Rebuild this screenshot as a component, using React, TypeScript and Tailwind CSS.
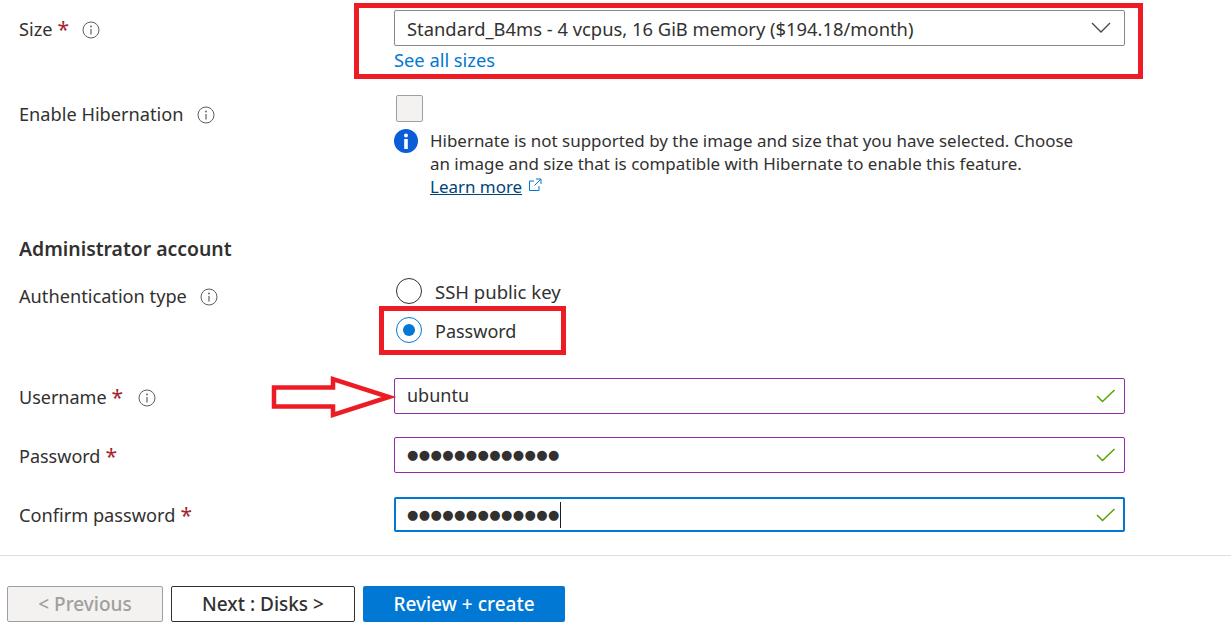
import type { ReactNode } from "react";

function InfoIcon() {
  return (
    <svg width="18" height="18" viewBox="0 0 18 18" className="shrink-0 text-[#605e5c]" fill="none" stroke="currentColor">
      <circle cx="9" cy="9" r="8" strokeWidth="1" />
      <path d="M9 8v5.5" strokeWidth="1.2" />
      <circle cx="9" cy="5.5" r="0.9" fill="currentColor" stroke="none" />
    </svg>
  );
}

function Check() {
  return (
    <svg width="20" height="14" viewBox="0 0 20 14" className="shrink-0" fill="none" stroke="#57a300" strokeWidth="1.5">
      <path d="M1 7l5.5 5.5L18.500 1" />
    </svg>
  );
}

function Label({ text, required, info, size = "text-[18.2px]", gap = "ml-[13px]" }: { text: string; required?: boolean; info?: boolean; size?: string; gap?: string }) {
  return (
    <div className={"w-[394px] shrink-0 pl-[19px] flex items-center text-[#323130] " + size}>
      <span>{text}</span>
      {required && <span className="ml-[5px] text-[21px] text-[#a4262c] leading-none">*</span>}
      {info && (
        <span className={gap}>
          <InfoIcon />
        </span>
      )}
    </div>
  );
}

function Input({ children, focused }: { children: ReactNode; focused?: boolean }) {
  return (
    <div
      className={
        focused
          ? "w-[731px] h-[35px] rounded-[2px] border-2 border-[#0078d4] flex items-center justify-between pl-[11px] pr-[7px]"
          : "w-[731px] h-[36px] rounded-[2px] border border-[#8f2da8] flex items-center justify-between pl-[12px] pr-[8px]"
      }
    >
      <div className="flex items-center">{children}</div>
      <Check />
    </div>
  );
}

function Dots() {
  return <span className="font-['DejaVu_Sans'] text-[13px] tracking-[0.4px] text-[#323130]">●●●●●●●●●●●●●</span>;
}

export default function App() {
  return (
    <div className="relative w-[1231px] h-[631px] overflow-hidden bg-white font-['Noto_Sans',sans-serif] text-[18px] text-[#323130]">
      <div className="pt-[10px]">
        {/* Size */}
        <div className="flex items-start">
          <div className="h-[38px] flex pt-[1px]">
            <Label text="Size" required info />
          </div>
          <div className="w-[731px]">
            <div className="h-[36px] rounded-[2px] border border-[#8a8886] flex items-center justify-between pl-[12px] pr-[13px]">
              <span className="text-[18.37px] pt-[1px]">Standard_B4ms - 4 vcpus, 16 GiB memory ($194.18/month)</span>
              <svg width="20" height="12" viewBox="0 0 20 12" fill="none" stroke="#484644" strokeWidth="1.3">
                <path d="M1 1l9 9 9-9" />
              </svg>
            </div>
            <a className="block h-[28px] leading-[27px] text-[18.3px] text-[#0078d4]">See all sizes</a>
          </div>
        </div>

        {/* Hibernation */}
        <div className="flex items-start mt-[21px]">
          <div className="h-[38px] flex pt-[1px]">
            <Label text="Enable Hibernation" info />
          </div>
          <div className="w-[731px]">
            <div className="ml-[2px] w-[27px] h-[27px] rounded-[2px] border border-[#a19f9d] bg-[#f3f2f1]" />
            <div className="flex mt-[7px] items-start">
              <svg width="24" height="24" viewBox="0 0 24 24" className="shrink-0">
                <circle cx="12" cy="12" r="12" fill="#0b5cd7" />
                <circle cx="12" cy="6.500" r="2" fill="#fff" />
                <rect x="10.200" y="10" width="3.600" height="10" fill="#fff" />
              </svg>
              <div className="ml-[12px] text-[16.95px] leading-[23px]">
                <p>
                  Hibernate is not supported by the image and size that you have selected. Choose
                  <br />
                  an image and size that is compatible with Hibernate to enable this feature.
                </p>
                <div className="flex items-center">
                  <a className="underline text-[#004578]">Learn more</a>
                  <svg width="14" height="14" viewBox="0 0 14 14" className="ml-[6px] mb-[3px]" fill="none" stroke="#0078d4" strokeWidth="1">
                    <path d="M6 3H1.500v9.500H11V8M8 1h5v5M13 1L6.500 7.500" />
                  </svg>
                </div>
              </div>
            </div>
          </div>
        </div>

        {/* Administrator account */}
        <h2 className="mt-[37px] pl-[19px] h-[28px] leading-[28px] text-[19.4px] font-semibold">Administrator account</h2>

        <div className="flex items-start mt-[15px]">
          <div className="h-[36px] flex pt-[2px]">
            <Label text="Authentication type" info />
          </div>
          <div className="ml-[2px] flex flex-col gap-[13px]">
            <label className="flex items-center h-[26px]">
              <span className="w-[26px] h-[26px] rounded-full border border-[#323130] bg-white" />
              <span className="ml-[13px] pt-[2px] text-[18.5px]">SSH public key</span>
            </label>
            <label className="flex items-center h-[26px]">
              <span className="w-[26px] h-[26px] rounded-full border border-[#0078d4] flex items-center justify-center">
                <span className="w-[12px] h-[12px] rounded-full bg-[#0078d4]" />
              </span>
              <span className="ml-[13px] pt-[2px]">Password</span>
            </label>
          </div>
        </div>

        {/* Credentials */}
        <div className="flex mt-[35px] h-[36px]">
          <div className="flex pt-[3px]">
            <Label text="Username" size="text-[18px]" required info gap="ml-[15px]" />
          </div>
          <Input>
            <span className="pb-[1px]">ubuntu</span>
          </Input>
        </div>
        <div className="flex mt-[23px] h-[36px]">
          <div className="flex pt-[3px]">
            <Label text="Password" size="text-[18px]" required />
          </div>
          <Input>
            <Dots />
          </Input>
        </div>
        <div className="flex mt-[24px] h-[35px]">
          <div className="flex pt-[2px]">
            <Label text="Confirm password" required />
          </div>
          <Input focused>
            <Dots />
            <span className="w-px h-[26px] bg-[#201f1e]" />
          </Input>
        </div>

        <div className="mt-[23px] h-px bg-[#e1dfdd]" />

        {/* Footer buttons */}
        <div className="flex gap-[8px] mt-[30px] pl-[7px] text-[19px] font-medium">
          <button className="w-[156px] h-[36px] rounded-[2px] border border-[#a19f9d] bg-[#f3f2f1] text-[#a19f9d]">&lt; Previous</button>
          <button className="w-[184px] h-[36px] rounded-[2px] border border-[#323130] bg-white text-[#323130]">Next : Disks &gt;</button>
          <button className="w-[202px] h-[36px] rounded-[2px] bg-[#0078d4] text-white">Review + create</button>
        </div>
      </div>

      {/* Annotations drawn over the form */}
      <div className="absolute left-[354px] top-[3px] w-[789px] h-[76px] border-[5px] border-[#ed1c24]" />
      <div className="absolute left-[379px] top-[306px] w-[187px] h-[49px] border-[5px] border-[#ed1c24]" />
      <svg className="absolute left-[268px] top-[372px]" width="130" height="50" viewBox="0 0 130 50" fill="none" stroke="#ed1c24" strokeWidth="4.500">
        <path d="M6 15.500h59V7l56 18-56 18v-8.500H6z" />
      </svg>
    </div>
  );
}
